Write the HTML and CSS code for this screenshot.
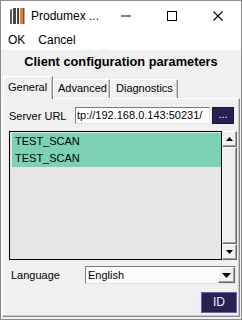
FILE: index.html
```html
<!DOCTYPE html>
<html>
<head>
<meta charset="utf-8">
<link rel="stylesheet" href="styles.css">
</head>
<body>
<div class="window">
  <div class="titlebar">
    <svg class="appicon" width="16" height="16" viewBox="0 0 16 16">
      <path d="M1 2.5 Q1 1 2.5 1 L3 1 L3 16 L1 16 Z" fill="#5a5a5a"/>
      <rect x="4" y="0" width="3" height="16" fill="#454545"/>
      <rect x="8" y="0" width="2" height="16" fill="#454545"/>
      <rect x="11" y="0" width="3" height="16" fill="#ec7a2c"/>
      <rect x="14" y="0" width="1.5" height="16" fill="#5a5a5a"/>
    </svg>
    <span class="title">Produmex ...</span>
    <div class="controls">
      <div class="ctl"><svg width="10" height="10" viewBox="0 0 10 10"><rect x="0" y="4.5" width="10" height="1" fill="#000"/></svg></div>
      <div class="ctl"><svg width="10" height="10" viewBox="0 0 10 10"><rect x="0.5" y="0.5" width="9" height="9" fill="none" stroke="#000" stroke-width="1"/></svg></div>
      <div class="ctl"><svg width="10" height="10" viewBox="0 0 10 10"><path d="M0.5 0.5 L9.5 9.5 M9.5 0.5 L0.5 9.5" stroke="#000" stroke-width="1.1"/></svg></div>
    </div>
  </div>
  <div class="menubar">
    <span class="menuitem">OK</span>
    <span class="menuitem">Cancel</span>
  </div>
  <div class="content">
    <div class="heading">Client configuration parameters</div>
    <div class="tabs">
      <div class="tab active">General</div>
      <div class="tab tab-adv">Advanced</div>
      <div class="tab tab-diag">Diagnostics</div>
    </div>
    <div class="panel">
      <div class="url-row">
        <span class="label">Server URL</span>
        <div class="textbox"><span class="tbtext">tp://192.168.0.143:50231/</span></div>
        <div class="dots">...</div>
      </div>
      <div class="listwrap">
        <div class="list">
          <div class="item">TEST_SCAN</div>
          <div class="item">TEST_SCAN</div>
        </div>
        <div class="scrollbar">
          <div class="sbtn"><svg width="7" height="4" viewBox="0 0 7 4"><path d="M3.5 0 L7 4 L0 4 Z" fill="#000"/></svg></div>
          <div class="thumb"></div>
          <div class="sbtn"><svg width="7" height="4" viewBox="0 0 7 4"><path d="M0 0 L7 0 L3.5 4 Z" fill="#000"/></svg></div>
        </div>
      </div>
      <div class="lang-row">
        <span class="label lang-label">Language</span>
        <div class="combo">
          <span class="combotext">English</span>
          <div class="ddbtn"><svg width="9" height="5" viewBox="0 0 9 5"><path d="M0 0 L9 0 L4.5 5 Z" fill="#000"/></svg></div>
        </div>
      </div>
      <div class="footer">
        <div class="idbtn">ID</div>
      </div>
    </div>
  </div>
</div>
</body>
</html>
```

FILE: styles.css
```css
* { box-sizing: border-box; }
html, body { margin: 0; padding: 0; }
body {
  width: 242px;
  height: 320px;
  overflow: hidden;
  font-family: "Liberation Sans", Arial, sans-serif;
  font-size: 11px;
  color: #000;
  background: #fff;
}
.window {
  width: 242px;
  height: 320px;
  border: 1px solid #8c8c8c;
  background: #f0f0f0;
  display: flex;
  flex-direction: column;
}
.titlebar {
  height: 29px;
  background: #fff;
  display: flex;
  align-items: center;
  flex: none;
}
.appicon { margin-left: 8px; flex: none; }
.title { margin-left: 6px; font-size: 12px; white-space: nowrap; }
.controls { margin-left: auto; display: flex; height: 29px; }
.ctl {
  width: 46px;
  height: 29px;
  display: flex;
  align-items: center;
  justify-content: center;
}
.menubar {
  height: 20px;
  background: #fff;
  display: flex;
  align-items: center;
  padding-left: 7px;
  font-size: 12px;
  flex: none;
}
.menuitem { margin-right: 13px; }
.content {
  flex: 1;
  display: flex;
  flex-direction: column;
  padding: 0 1px 2px 1px;
}
.heading {
  margin-top: 3px;
  height: 18px;
  line-height: 18px;
  text-align: center;
  font-weight: bold;
  font-size: 12.8px;
}
.tabs {
  margin-top: 5px;
  height: 22px;
  display: flex;
  align-items: flex-end;
  padding-left: 1px;
  position: relative;
  z-index: 1;
}
.tab {
  height: 19px;
  border-top: 1px solid #fff;
  border-left: 1px solid #fff;
  border-right: 1px solid #8a8a8a;
  box-shadow: inset -1px 0 0 #c8c8c8;
  padding-left: 4px;
  line-height: 17px;
  background: #f0f0f0;
}
.tab.active {
  width: 50px;
  height: 23px;
  margin-bottom: -1px;
  padding-left: 4px;
  line-height: 20px;
}
.tab-adv { width: 57px; }
.tab-diag { width: 68px; padding-left: 5px; }
.panel {
  flex: 1;
  margin-right: 0;
  border-top: 1px solid #fff;
  border-left: 1px solid #fff;
  border-right: 1px solid #8a8a8a;
  border-bottom: 1px solid #8a8a8a;
  box-shadow: inset -1px -1px 0 #c8c8c8;
  display: flex;
  flex-direction: column;
  padding: 0 2px 0 6px;
}
.url-row {
  margin-top: 8px;
  height: 17px;
  display: flex;
  align-items: center;
}
.label { width: 66px; flex: none; }
.textbox {
  width: 135px;
  height: 17px;
  background: #fff;
  border-top: 1px solid #7a7a7a;
  border-left: 1px solid #7a7a7a;
  border-right: 1px solid #e3e3e3;
  border-bottom: 1px solid #e3e3e3;
  overflow: hidden;
  white-space: nowrap;
  line-height: 15px;
  padding-left: 1px;
}
.dots {
  margin-left: 2px;
  width: 22px;
  height: 17px;
  background: #2a2150;
  border: 1px solid #1a1438;
  color: #fff;
  text-align: center;
  line-height: 13px;
}
.listwrap {
  margin-top: 7px;
  height: 129px;
  display: flex;
  width: 228px;
}
.list {
  width: 213px;
  height: 129px;
  border: 1px solid #000;
  background: #e6e6e6;
  padding: 1px 0 0 2px;
}
.item {
  height: 17px;
  line-height: 17px;
  background: #7cd2b2;
  padding-left: 3px;
}
.scrollbar {
  width: 15px;
  height: 129px;
  display: flex;
  flex-direction: column;
}
.sbtn {
  height: 16px;
  border-top: 1px solid #fff;
  border-left: 1px solid #fff;
  border-right: 1px solid #6a6a6a;
  border-bottom: 1px solid #6a6a6a;
  box-shadow: inset -1px -1px 0 #a0a0a0;
  background: #f0f0f0;
  display: flex;
  align-items: center;
  justify-content: center;
  flex: none;
}
.thumb {
  flex: 1;
  border-top: 1px solid #fff;
  border-left: 1px solid #fff;
  border-right: 1px solid #6a6a6a;
  border-bottom: 1px solid #6a6a6a;
  box-shadow: inset -1px -1px 0 #a0a0a0;
  background: #f0f0f0;
}
.lang-row {
  margin-top: 6px;
  height: 18px;
  display: flex;
  align-items: center;
  padding-left: 2px;
}
.lang-label { width: 74px; }
.combo {
  width: 151px;
  height: 18px;
  background: #fbfbfb;
  border-top: 1px solid #7a7a7a;
  border-left: 1px solid #7a7a7a;
  border-right: 1px solid #e3e3e3;
  border-bottom: 1px solid #e3e3e3;
  display: flex;
  align-items: center;
}
.combotext { padding-left: 2px; flex: 1; }
.ddbtn {
  width: 17px;
  height: 16px;
  border-top: 1px solid #fff;
  border-left: 1px solid #fff;
  border-right: 1px solid #6a6a6a;
  border-bottom: 1px solid #6a6a6a;
  box-shadow: inset -1px -1px 0 #a0a0a0;
  background: #f0f0f0;
  display: flex;
  align-items: center;
  justify-content: center;
}
.footer {
  margin-top: 8px;
  display: flex;
  justify-content: flex-end;
}
.idbtn {
  width: 36px;
  height: 21px;
  background: #2a2150;
  border: 1px solid #6a5cc0;
  color: #f0f0ff;
  text-align: center;
  line-height: 19px;
  font-size: 12px;
}
```
